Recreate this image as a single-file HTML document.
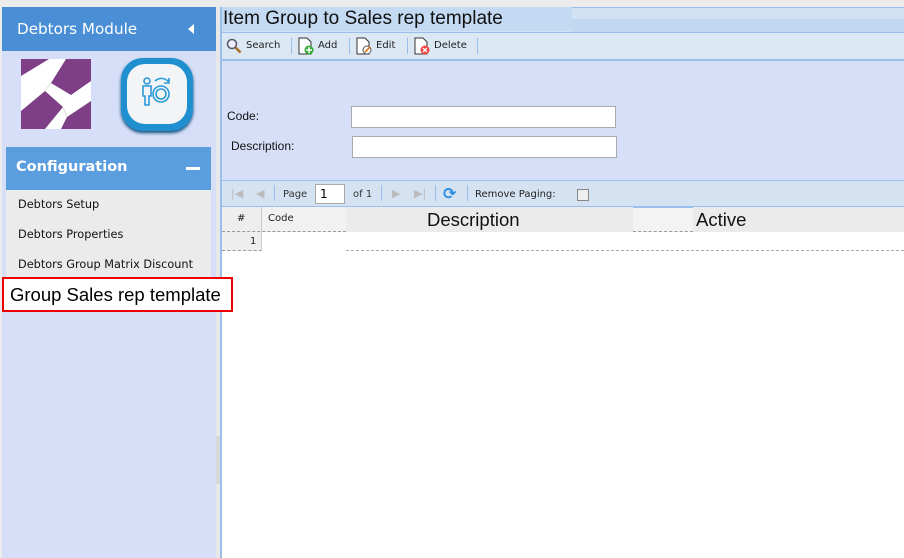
<!DOCTYPE html>
<html><head><style>
*{margin:0;padding:0;box-sizing:border-box}
body{width:904px;height:558px;overflow:hidden;background:#fff;font-family:"DejaVu Sans","Liberation Sans",sans-serif;position:relative}
.a{position:absolute}
.s{font-family:"Liberation Sans",sans-serif}
.t{font-size:10px;color:#222}
</style></head><body>
<div class="a" style="left:0;top:0;width:904px;height:7px;background:#ececec"></div>
<!-- sidebar -->
<div class="a" style="left:0;top:7px;width:216px;height:551px;background:#d6dff7"></div>
<div class="a" style="left:0;top:7px;width:2px;height:551px;background:#ececec"></div>
<div class="a" style="left:2px;top:7px;width:214px;height:44px;background:#4a8fd6"></div>
<div class="a" style="left:17px;top:20px;color:#fff;font-size:15.2px">Debtors Module</div>
<div class="a" style="left:188px;top:24px;width:0;height:0;border-top:5px solid transparent;border-bottom:5px solid transparent;border-right:6px solid #fff"></div>
<!-- logo -->
<svg class="a" style="left:21px;top:59px" width="70" height="70" viewBox="0 0 70 70">
<rect width="70" height="70" fill="#fff"/>
<polygon points="0,0 28,0 0,17" fill="#7e3f86"/>
<polygon points="45,0 70,0 70,22 50,36 30,24" fill="#7e3f86"/>
<polygon points="0,52 24,32 42,48 24,70 0,70" fill="#7e3f86"/>
<polygon points="70,42 46,58 40,70 70,70" fill="#7e3f86"/>
<path d="M30 24 L24 32 M42 48 L46 58" stroke="#ddd" stroke-width="1"/>
</svg>
<div class="a" style="left:121px;top:58px;width:72px;height:73px;border-radius:22px;background:#1f8fd0;box-shadow:0 2px 3px #0d4a7a"></div>
<div class="a" style="left:127px;top:64px;width:60px;height:60px;border-radius:18px;background:#f2f4f6"></div>
<svg class="a" style="left:141px;top:75px" width="32" height="32" viewBox="0 0 32 32" fill="none" stroke="#2a9ad8" stroke-width="1.6">
<circle cx="6" cy="6" r="3"/><path d="M2 11h8v10H8v9H4v-9H2z"/><circle cx="20" cy="19" r="8"/><circle cx="20" cy="19" r="5"/><path d="M14 6c5-4 10-3 14 1M28 3v5h-5"/>
</svg>
<div class="a" style="left:6px;top:147px;width:205px;height:43px;background:#5b9ee0"></div>
<div class="a" style="left:16px;top:159px;color:#fff;font-size:14.5px;font-weight:bold">Configuration</div>
<div class="a" style="left:186px;top:167px;width:14px;height:3px;background:#fff"></div>
<div class="a" style="left:6px;top:190px;width:205px;height:88px;background:#ebebeb"></div>
<div class="a" style="left:18px;top:198px;font-size:11.3px;color:#111">Debtors Setup</div>
<div class="a" style="left:18px;top:228px;font-size:11.3px;color:#111">Debtors Properties</div>
<div class="a" style="left:18px;top:258px;font-size:11.3px;color:#111">Debtors Group Matrix Discount</div>
<!-- splitter -->
<div class="a" style="left:216px;top:7px;width:4px;height:551px;background:#e8e8e8"></div>
<div class="a" style="left:216px;top:436px;width:4px;height:48px;background:#d8d8d8"></div>
<div class="a" style="left:220px;top:7px;width:2px;height:551px;background:#9bbfec"></div>
<div class="a s" style="left:2px;top:277px;width:231px;height:35px;border:2px solid #e00;background:#fff;font-size:18.5px;padding:5px 0 0 6px;color:#000;z-index:5">Group Sales rep template</div>
<!-- title -->
<div class="a" style="left:222px;top:7px;width:682px;height:25px;background:#d2e2f5;border-top:1px solid #9bbfec"></div>
<div class="a" style="left:572px;top:19px;width:332px;height:13px;background:#c2d7f0"></div>
<div class="a s" style="left:222px;top:7px;width:350px;height:24px;background:#c4d9f2;font-size:19px;padding:1px 0 0 1px;color:#111">Item Group to Sales rep template</div>
<!-- toolbar -->
<div class="a" style="left:222px;top:32px;width:682px;height:29px;background:#dce7f4;border-top:1px solid #9bbfec;border-bottom:2px solid #9bbfec"></div>
<svg class="a" style="left:226px;top:38px" width="16" height="16"><circle cx="6" cy="6" r="4.5" fill="#eef" stroke="#556" stroke-width="1.5"/><path d="M9.5 9.5l5 5" stroke="#a86b2a" stroke-width="2.5"/></svg>
<div class="a t" style="left:246px;top:40px">Search</div>
<div class="a" style="left:291px;top:38px;width:1px;height:16px;background:#9bbfec"></div>
<div class="a" style="left:349px;top:38px;width:1px;height:16px;background:#9bbfec"></div>
<div class="a" style="left:407px;top:38px;width:1px;height:16px;background:#9bbfec"></div>
<div class="a" style="left:477px;top:38px;width:1px;height:16px;background:#9bbfec"></div>
<svg class="a" style="left:297px;top:37px" width="18" height="18"><path d="M2 1h8l4 4v12H2z" fill="#fff" stroke="#333"/><circle cx="12" cy="13" r="4.5" fill="#3a3"/><path d="M12 10v6M9 13h6" stroke="#fff" stroke-width="1.5"/></svg>
<div class="a t" style="left:318px;top:40px">Add</div>
<svg class="a" style="left:355px;top:37px" width="18" height="18"><path d="M2 1h8l4 4v12H2z" fill="#fff" stroke="#333"/><circle cx="12" cy="13" r="4" fill="#fff" stroke="#555"/><path d="M10 15l5-5" stroke="#d60" stroke-width="1.5"/></svg>
<div class="a t" style="left:376px;top:40px">Edit</div>
<svg class="a" style="left:413px;top:37px" width="18" height="18"><path d="M2 1h8l4 4v12H2z" fill="#fff" stroke="#333"/><circle cx="12" cy="13" r="4.5" fill="#e44"/><path d="M10 11l4 4M14 11l-4 4" stroke="#fff" stroke-width="1.3"/></svg>
<div class="a t" style="left:434px;top:40px">Delete</div>
<!-- form -->
<div class="a" style="left:222px;top:61px;width:682px;height:119px;background:#d6dff7"></div>
<div class="a s" style="left:227px;top:109px;font-size:12px;color:#111">Code:</div>
<div class="a s" style="left:231px;top:139px;font-size:12px;color:#111">Description:</div>
<div class="a" style="left:351px;top:106px;width:265px;height:22px;background:#fff;border:1px solid #aaa"></div>
<div class="a" style="left:352px;top:136px;width:265px;height:22px;background:#fff;border:1px solid #aaa"></div>
<!-- paging -->
<div class="a" style="left:222px;top:180px;width:682px;height:27px;background:#d5e2f2;border-top:1px solid #9bbfec;border-bottom:1px solid #9bbfec"></div>
<div class="a" style="left:231px;top:187px;color:#bbb;font-size:11px">|◀</div>
<div class="a" style="left:256px;top:187px;color:#bbb;font-size:11px">◀</div>
<div class="a" style="left:274px;top:185px;width:1px;height:16px;background:#9bbfec"></div>
<div class="a t" style="left:283px;top:189px;color:#333">Page</div>
<div class="a" style="left:315px;top:184px;width:30px;height:20px;background:#fff;border:1px solid #aaa;font-size:12px;padding:2px 0 0 4px">1</div>
<div class="a t" style="left:353px;top:189px;color:#333">of 1</div>
<div class="a" style="left:381px;top:185px;width:1px;height:16px;background:#9bbfec"></div>
<div class="a" style="left:392px;top:187px;color:#bbb;font-size:11px">▶</div>
<div class="a" style="left:414px;top:187px;color:#bbb;font-size:11px">▶|</div>
<div class="a" style="left:435px;top:185px;width:1px;height:16px;background:#9bbfec"></div>
<div class="a" style="left:443px;top:184px;color:#2a8de0;font-size:16px;font-weight:bold">⟳</div>
<div class="a" style="left:467px;top:185px;width:1px;height:16px;background:#9bbfec"></div>
<div class="a t" style="left:475px;top:189px">Remove Paging:</div>
<div class="a" style="left:577px;top:189px;width:12px;height:12px;border:1px solid #888;background:#eee"></div>
<!-- grid header -->
<div class="a" style="left:222px;top:207px;width:682px;height:25px;background:#ebebeb"></div>
<div class="a" style="left:222px;top:207px;width:40px;height:25px;background:#eee;border-right:1px solid #ccc"></div>
<div class="a" style="left:262px;top:207px;width:84px;height:25px;background:#f1f1f1"></div>
<div class="a" style="left:633px;top:207px;width:60px;height:25px;background:#f3f3f3;border-top:1px solid #9bbfec;border-bottom:1px dashed #999"></div>
<div class="a t" style="left:237px;top:213px">#</div>
<div class="a t" style="left:268px;top:213px">Code</div>
<div class="a s" style="left:427px;top:209px;font-size:18.5px;color:#111">Description</div>
<div class="a s" style="left:696px;top:209px;font-size:18.5px;color:#111">Active</div>
<div class="a" style="left:222px;top:231px;width:124px;border-top:1px dashed #999"></div>
<div class="a" style="left:222px;top:232px;width:40px;height:19px;background:#eee;border-right:1px solid #ccc;border-bottom:1px dashed #999"></div>
<div class="a t" style="left:250px;top:236px">1</div>
<div class="a" style="left:346px;top:250px;width:558px;border-top:1px dashed #aaa"></div>
</body></html>
